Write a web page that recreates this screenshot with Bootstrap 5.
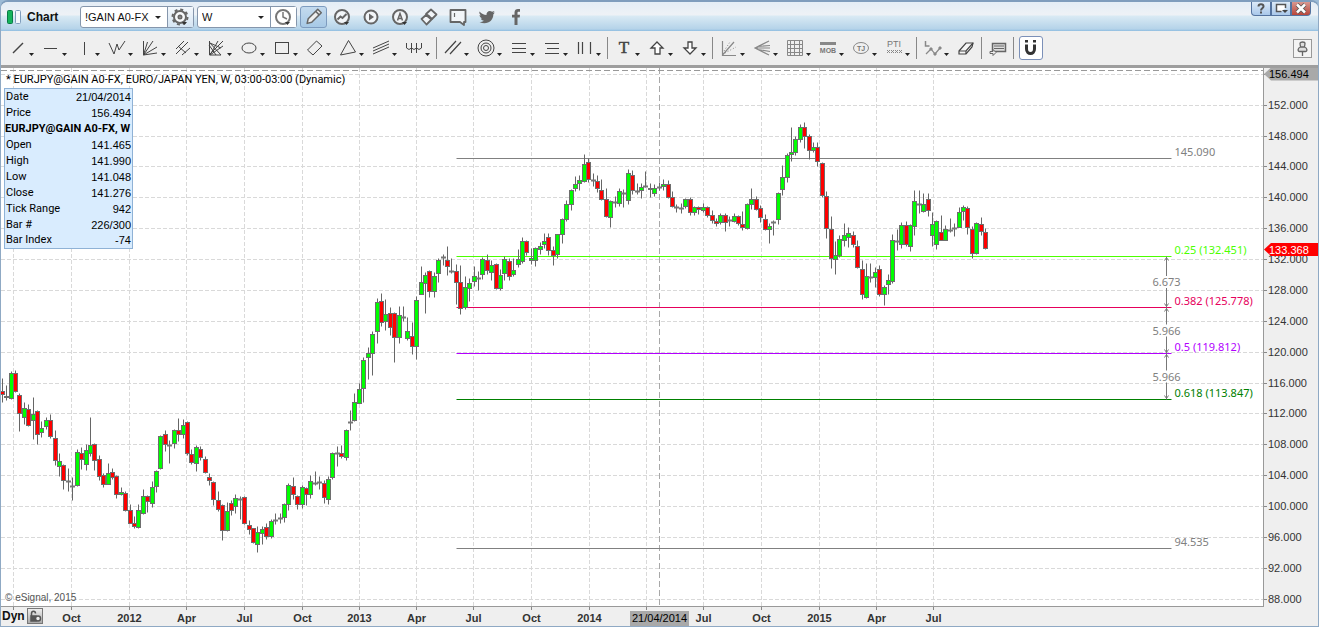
<!DOCTYPE html>
<html lang="en">
<head>
<meta charset="utf-8">
<meta name="viewport" content="width=device-width, initial-scale=1">
<title>Chart - EURJPY</title>
<link href="https://cdn.jsdelivr.net/npm/bootstrap@5.3.0/dist/css/bootstrap.min.css" rel="stylesheet">
<style>
  :root { --ui: "Liberation Sans", Arial, sans-serif; --edge: #8fa9c4; --panel: #efefef; }
  body { font: 11px/16px var(--ui); color: #111; background: #9dbbd6; }
  .window { border: 1px solid var(--edge); border-top: 2px solid #7f9dbd; border-radius: 8px 8px 0 0; background: var(--panel); }
  .titlebar { height: 29px; padding-left: 6px; background: linear-gradient(#e4edf6, #eef2f6 13px, #d9eaf4 14px, #b5d3e9 27px, #8fbde0); }
  .app-name { font-size: 12px; font-weight: 700; width: 58px; padding-left: 5px; }
  .combo { height: 22px; background: #fff; border: 1px solid #8596ac; border-radius: 3px; margin-right: 3px; }
  .combo select { appearance: none; border: 0; background: transparent; padding: 0 0 0 4px; font: 11px/20px var(--ui); color: #111; height: 20px; outline-offset: -1px; }
  .pick::after { content: ""; position: absolute; right: 6px; top: 9px; border: 3px solid transparent; border-top-color: #222; border-bottom: 0; pointer-events: none; }
  .symbol-pick { width: 86px; }
  .interval-pick { width: 72px; }
  .plain { border: 0; background: none; padding: 0; display: block; color: #666; }
  .plain svg, .tool svg { display: block; }
  .combo .plain { border-left: 1px solid #8596ac; height: 20px; width: 26px; background: linear-gradient(#f4f8fc, #d5e5f3); }
  .combo .plain.white { background: #fff; }
  .pencil { height: 22px; width: 27px; border: 1px solid #7d9bbf; border-radius: 3px; background: linear-gradient(#c4daee, #a7c9e6); }
  .top-tool { width: 29px; }
  .win-btns { height: 14px; margin-right: 7px; }
  .win-btns button { width: 20px; height: 14px; border: 1px solid #54739f; border-top: 0; background: linear-gradient(#dceaf8, #a9c8ea); }
  .win-btns button.closer { background: linear-gradient(#d99890, #b8453a); }
  .win-btns button:first-child { border-radius: 0 0 0 4px; }
  .win-btns button:last-child { border-radius: 0 0 4px 0; }
  .toolbar { height: 34px; padding: 0 6px 0 4px; }
  .tool { border: 0; background: none; padding: 0; width: 33px; height: 24px; color: #444; }
  .tool.narrow { width: 26px; }
  .tool.faded { color: #888; }
  .rule { width: 1px; height: 22px; background: #888; margin: 0 3px 0 2px; }
  .magnet { width: 24px; height: 24px; border: 1px solid #7b90b8; border-radius: 3px; background: #fff; margin-left: 2px; }
  .pin { width: 19px; height: 19px; border: 1px solid #999; background: #f4f4f4; color: #666; }
  .workspace { border-top: 3px solid #9e9e9e; display: grid; grid-template-columns: minmax(0, 1fr) 54px; grid-template-rows: minmax(0, 1fr) 19px; }
  .plot { background: #fff; border-right: 1px solid #999; border-bottom: 1px solid #999; overflow: hidden; }
  .workspace svg.scale { display: block; width: 100%; height: 100%; }
  .workspace svg text { font-family: var(--ui); font-size: 11px; fill: #333; }
  .workspace svg text.fib { font-family: "Noto Sans", sans-serif; }
  .readout { left: 3px; top: 4px; font-family: Roboto, var(--ui); color: #000; }
  .readout h1 { font-size: 11px; line-height: 16px; margin: 0 0 0 2px; font-weight: 400; }
  .bar-info { width: 129px; border: 1px solid #8fb2d6; background: #d9ecfe; }
  .bar-info th, .bar-info td { padding: 0 1px; height: 16px; line-height: 14px; font-weight: 400; white-space: nowrap; }
  .bar-info td { font-family: var(--ui); }
  .bar-info th[colspan] { font-weight: 700; padding: 0; }
  .credit { left: 4px; bottom: 0; font-size: 10px; color: #555; }
  .dyn { font-size: 12px; font-weight: 700; left: 1px; top: 0; line-height: 18px; gap: 2px; }
  .lock { width: 16px; height: 16px; border: 1px solid #777; background: linear-gradient(#eee, #aaa); padding: 0; color: #555; }
</style>
</head>
<body>
<svg width="0" height="0" class="position-absolute" aria-hidden="true">
  <defs><path id="caret" d="M24 17h5l-2.500 3z" fill="#222"/></defs>
</svg>
<div class="window vh-100 d-flex flex-column overflow-hidden">

  <header class="titlebar d-flex align-items-center flex-shrink-0">
    <svg width="15" height="16" aria-hidden="true"><rect x=".5" y="1.500" width="5" height="13" rx="1" fill="#16b45c" stroke="#0a7a46"/><rect x="8.500" y="1.500" width="5" height="13" rx="1" fill="#f4f8fc" stroke="#7f9dbd"/></svg>
    <span class="app-name">Chart</span>
    <div class="combo d-flex">
      <div class="pick position-relative"><select class="symbol-pick" aria-label="Symbol"><option>!GAIN A0-FX</option></select></div>
      <button class="plain" type="button" aria-label="Symbol settings"><svg width="25" height="20" fill="none" stroke="currentColor"><circle cx="12" cy="10" r="6" fill="#f6f8fa" stroke-width="2"/><circle cx="12" cy="10" r="7.500" stroke-width="2" stroke-dasharray="3 2.890"/><circle cx="12" cy="10" r="1.500" stroke-width="2"/><path d="M14 15h5l-2.500 3z" fill="#333" stroke="none"/></svg></button>
    </div>
    <div class="combo d-flex">
      <div class="pick position-relative"><select class="interval-pick" aria-label="Interval"><option>W</option></select></div>
      <button class="plain white" type="button" aria-label="Time template"><svg width="25" height="20" fill="none" stroke="#777"><circle cx="12" cy="10" r="7" stroke-width="2"/><path d="M12 5v5l4 2" stroke-width="1.500"/><path d="M14 15h5l-2.500 3z" fill="#333" stroke="none"/></svg></button>
    </div>
    <button class="plain pencil" type="button" aria-label="Drawing tools"><svg width="25" height="20"><g transform="translate(12.500 10) rotate(45)" fill="#eee" stroke="#666" stroke-width="1.500" stroke-linejoin="round"><path d="M-2.500-8.500h5V5L0 9-2.500 5z"/><path d="M-2.500-5.500h5"/></g></svg></button>
    <button class="plain top-tool" type="button" aria-label="Studies"><svg width="29" height="20" fill="none" stroke="currentColor"><circle cx="15" cy="10" r="7" fill="#f2f5f8" stroke-width="2"/><path d="M10.500 12.500l3-3 2 1.500 4-4" stroke-width="2"/><path d="M17 15h5l-2.500 3z" fill="#333" stroke="none"/></svg></button>
    <button class="plain top-tool" type="button" aria-label="Playback"><svg width="29" height="20"><circle cx="15" cy="10" r="6.500" fill="#f2f5f8" stroke="currentColor" stroke-width="2"/><path d="M13 6.500l5 3.500-5 3.500z" fill="currentColor"/></svg></button>
    <button class="plain top-tool" type="button" aria-label="Alerts"><svg width="29" height="20"><circle cx="15" cy="10" r="7" fill="#f2f5f8" stroke="currentColor" stroke-width="2"/><path d="M12.500 13.500l2.500-7 2.500 7M13.500 11.500h3" fill="none" stroke="currentColor" stroke-width="1.500"/><path d="M17 15h5l-2.500 3z" fill="#333"/></svg></button>
    <button class="plain top-tool" type="button" aria-label="Link"><svg width="29" height="20" fill="#f2f5f8" stroke="currentColor" stroke-width="1.800" stroke-linejoin="round"><path d="M12 7l5-4.500 5.500 5L18 12z"/><path d="M7.500 12l4.500-4 5.500 4.500-5 5z"/><path d="M14 8l3 4" stroke-width="2"/></svg></button>
    <button class="plain top-tool" type="button" aria-label="Comment"><svg width="29" height="20"><path d="M7.500 3h15v12H21v3l-4-3H7.500z" fill="#f2f5f8" stroke="currentColor" stroke-width="1.800" stroke-linejoin="round"/><path d="M11.500 6v4" stroke="currentColor" stroke-width="1.200"/></svg></button>
    <button class="plain top-tool" type="button" aria-label="Twitter"><svg width="29" height="20" fill="currentColor"><path d="M7.500 4.500c2 2.300 4.300 3.300 7 3.500-.5-3 3-5.500 5.600-3.200l2.400-.8-1.300 2 1.600-.4-1.500 1.800c.2 6-6.300 11.200-13.800 7.600 2 0 3.300-.4 4.500-1.300-1.700-.2-2.600-1-3.200-2.300h1.400c-1.700-.6-2.700-1.800-2.600-3.400l1.400.4C7.500 7.200 7 6 7.500 4.500z"/></svg></button>
    <button class="plain top-tool" type="button" aria-label="Facebook"><svg width="29" height="20" fill="currentColor"><path d="M13.500 18v-7.500H11V7.700h2.500V5.500C13.500 3 15 2 17 2h2v2.700h-1.500c-.8 0-1 .4-1 1.200v1.800H19l-.3 2.800h-2.200V18z"/></svg></button>
    <div class="win-btns d-flex ms-auto align-self-start">
      <button class="plain" type="button" aria-label="Help"><svg width="18" height="13"><path d="M6.500 4.500c0-3 5-3 5 0 0 1.700-2.500 2-2.500 4M9 9.500v2" fill="none" stroke="#555" stroke-width="2"/></svg></button>
      <button class="plain" type="button" aria-label="Window options"><svg width="18" height="13"><path d="M13.500 6V2.500h-9v7h5" fill="#fff" stroke="#555" stroke-width="1.500"/><path d="M10 8h6l-3 3z" fill="#444"/></svg></button>
      <button class="plain closer" type="button" aria-label="Close"><svg width="18" height="13"><path d="M5 2.500l8 8M13 2.500l-8 8" stroke="#555" stroke-width="4"/><path d="M5 2.500l8 8M13 2.500l-8 8" stroke="#fff" stroke-width="2.500"/></svg></button>
    </div>
  </header>

  <nav class="toolbar d-flex align-items-center flex-shrink-0" aria-label="Line tools">
    <button class="tool" type="button" aria-label="Trend line"><svg width="33" height="24" fill="none" stroke="currentColor"><path d="M8 17L18 7" stroke-width="1.500"/><use href="#caret" stroke="none"/></svg></button>
    <button class="tool" type="button" aria-label="Horizontal line"><svg width="33" height="24" fill="none" stroke="currentColor"><path d="M6 12.500h13"/><use href="#caret" stroke="none"/></svg></button>
    <button class="tool" type="button" aria-label="Vertical line"><svg width="33" height="24" fill="none" stroke="currentColor"><path d="M13.500 6v13"/><use href="#caret" stroke="none"/></svg></button>
    <button class="tool" type="button" aria-label="Zigzag"><svg width="33" height="24" fill="none" stroke="currentColor"><path d="M5 7l5 11 3-10 2 6 6-9"/><use href="#caret" stroke="none"/></svg></button>
    <button class="tool" type="button" aria-label="Fan"><svg width="33" height="24" fill="none" stroke="currentColor"><path d="M6.500 5v14L20 17M6.500 19L20 11M6.500 19L16 5M6.500 19l4-13"/><use href="#caret" stroke="none"/></svg></button>
    <button class="tool" type="button" aria-label="Pitchfork"><svg width="33" height="24" fill="none" stroke="currentColor"><path d="M6 13l8-8M6 18L18 6M12 19l8-7M8 10l8 7"/><use href="#caret" stroke="none"/></svg></button>
    <button class="tool" type="button" aria-label="Gann fan"><svg width="33" height="24" fill="none" stroke="currentColor"><path d="M6.500 5v14H18M6 19L20 5M6 6l12 13M7 19L15 5M7 19l13-9M6 9l7 10M7 7l11 5"/><use href="#caret" stroke="none"/></svg></button>
    <button class="tool" type="button" aria-label="Ellipse"><svg width="33" height="24" fill="none" stroke="currentColor"><ellipse cx="13" cy="12" rx="7" ry="5"/><use href="#caret" stroke="none"/></svg></button>
    <button class="tool" type="button" aria-label="Rectangle"><svg width="33" height="24" fill="none" stroke="currentColor"><rect x="6.500" y="6.500" width="13" height="11"/><use href="#caret" stroke="none"/></svg></button>
    <button class="tool" type="button" aria-label="Parallelogram"><svg width="33" height="24" fill="none" stroke="currentColor"><path d="M5.500 14l9-9 5.500 5-9 9z"/><use href="#caret" stroke="none"/></svg></button>
    <button class="tool" type="button" aria-label="Triangle"><svg width="33" height="24" fill="none" stroke="currentColor"><path d="M13.500 4.500L20.500 16l-15 3z"/><use href="#caret" stroke="none"/></svg></button>
    <button class="tool" type="button" aria-label="Regression channel"><svg width="33" height="24" fill="none" stroke="currentColor"><path d="M5 12l16-7M5 15l16-7M5 18l16-7"/><use href="#caret" stroke="none"/></svg></button>
    <button class="tool" type="button" aria-label="Cycle lines"><svg width="33" height="24" fill="none" stroke="currentColor"><path d="M5.500 7v5q2.500 3 5 0 2.500 3 5 0 2.500 3 5 0V7M10.500 7v10M15.500 7v10"/><use href="#caret" stroke="none"/></svg></button>
    <span class="rule"></span>
    <button class="tool" type="button" aria-label="Parallel lines"><svg width="33" height="24" fill="none" stroke="currentColor" stroke-width="1.200"><path d="M5 17L16 5M10 18L21 6"/><use href="#caret" stroke="none"/></svg></button>
    <button class="tool" type="button" aria-label="Fibonacci circles"><svg width="33" height="24" fill="none" stroke="currentColor"><circle cx="13" cy="12" r="8"/><circle cx="13" cy="12" r="5"/><circle cx="13" cy="12" r="2.500"/><use href="#caret" stroke="none"/></svg></button>
    <button class="tool" type="button" aria-label="Fibonacci retracement"><svg width="33" height="24" fill="none" stroke="currentColor"><path d="M6 7.500h14M6 12.500h14M6 16.500h14" stroke-width="1.200"/><use href="#caret" stroke="none"/></svg></button>
    <button class="tool" type="button" aria-label="Fibonacci extension"><svg width="33" height="24" fill="none" stroke="currentColor"><path d="M6 7.500h14M8 12.500h12M6 17.500h14" stroke-width="1.200"/><use href="#caret" stroke="none"/></svg></button>
    <button class="tool" type="button" aria-label="Fibonacci time"><svg width="33" height="24" fill="none" stroke="currentColor"><path d="M6.500 6v12M10.500 6v12M18.500 6v12" stroke-width="1.200"/><use href="#caret" stroke="none"/></svg></button>
    <span class="rule"></span>
    <button class="tool" type="button" aria-label="Text"><svg width="33" height="24"><text x="13" y="17" text-anchor="middle" font-family="Liberation Serif, serif" font-size="17" stroke="#444" stroke-width="0.500" fill="#444">T</text><use href="#caret"/></svg></button>
    <button class="tool" type="button" aria-label="Up arrow"><svg width="33" height="24" fill="#fff" stroke="currentColor" stroke-width="1.300"><path d="M13 6l6 6h-3v6h-5v-6H7z"/><use href="#caret" stroke="none"/></svg></button>
    <button class="tool" type="button" aria-label="Down arrow"><svg width="33" height="24" fill="#fff" stroke="currentColor" stroke-width="1.300"><path d="M13 18l6-6h-4V6h-4v6H7z"/><use href="#caret" stroke="none"/></svg></button>
    <span class="rule"></span>
    <button class="tool faded" type="button" aria-label="Speed lines"><svg width="33" height="24" fill="none" stroke="currentColor"><path d="M6.500 5v14.500H20M6.500 19L18 6" stroke-width="1.200"/><path d="M8 15l6-9M9 17l11-6" stroke-dasharray="1 2"/><use href="#caret" stroke="none"/></svg></button>
    <button class="tool faded" type="button" aria-label="Andrews fan"><svg width="33" height="24" fill="none" stroke="currentColor" stroke-width="1.200"><path d="M20 5L6 12l14 7M6 12h15M9 10.500l12-1M9 13.500l12 2"/><use href="#caret" stroke="none"/></svg></button>
    <button class="tool faded" type="button" aria-label="Gann box"><svg width="33" height="24" fill="none" stroke="currentColor"><path d="M5.500 4.500h15v15h-15zM8.500 4.500v15M12.500 4.500v15M17.500 4.500v15M5.500 8.500h15M5.500 12.500h15M5.500 16.500h15"/><use href="#caret" stroke="none"/></svg></button>
    <button class="tool faded" type="button" aria-label="Make or break"><svg width="33" height="24"><path d="M5 6h16v3H5z" fill="currentColor"/><text x="13" y="17" text-anchor="middle" font-family="Liberation Sans, sans-serif" font-size="7" font-weight="700" fill="#777">MOB</text><use href="#caret"/></svg></button>
    <button class="tool faded" type="button" aria-label="TJ ellipse"><svg width="33" height="24"><ellipse cx="13" cy="12" rx="7.500" ry="5.500" fill="none" stroke="currentColor"/><text x="13" y="15" text-anchor="middle" font-family="Liberation Sans, sans-serif" font-size="7" font-weight="700" fill="#777">TJ</text><use href="#caret"/></svg></button>
    <button class="tool faded" type="button" aria-label="Profit taking index"><svg width="33" height="24"><text x="13" y="11" text-anchor="middle" font-family="Liberation Sans, sans-serif" font-size="9" fill="#777">PTI</text><path d="M6 14l3 3M9 14l-3 3M10 14l3 3M13 14l-3 3M14 14l3 3M17 14l-3 3M18 14l3 3M21 14l-3 3" stroke="currentColor"/><use href="#caret"/></svg></button>
    <span class="rule"></span>
    <button class="tool faded" type="button" aria-label="Elliott labels"><svg width="33" height="24" fill="none" stroke="currentColor"><path d="M5.500 5v5h4" stroke-width="1.500"/><path d="M6 18l5-5 4 5 5-6" stroke-width="1.200"/><path d="M10 12h2v2h-2zM14 17h2v2h-2zM19 11h2v2h-2z" fill="currentColor"/><use href="#caret" stroke="none"/></svg></button>
    <button class="tool narrow" type="button" aria-label="Eraser"><svg width="26" height="24" fill="#f6f6f6" stroke="currentColor" stroke-width="1.200"><path d="M6 15l7-8h7l-1 4-6 7H6z"/><path d="M6 15h7l7-8M13 15v3" fill="none"/></svg></button>
    <span class="rule"></span>
    <button class="tool narrow" type="button" aria-label="Notes"><svg width="26" height="24" fill="none" stroke="#666"><path d="M7.500 7.500h13v8h-13z" fill="#ddd" stroke-width="1.500"/><path d="M9 10h10M9 12.500h10"/><path d="M5 15.500h3v-2l3 3-3 3v-2H5z" fill="#efefef"/></svg></button>
    <span class="rule"></span>
    <button class="tool magnet" type="button" aria-label="Snap"><svg width="22" height="22" fill="none" stroke="#333" stroke-width="3"><path d="M6.500 7.500V12c0 6 8 6 8 0V7.500M6.500 3v2.500M14.500 3v2.500"/></svg></button>
    <button class="tool pin ms-auto" type="button" aria-label="Pin toolbar"><svg width="17" height="17" fill="#ddd" stroke="currentColor" stroke-width="1.300"><path d="M8.500 12v4" /><path d="M6 3.500c0-2 5-2 5 0L10.500 7c3 1 3 4.500 1 4.500h-6c-2 0-2-3.500 1-4.500zM6.500 7h4"/></svg></button>
  </nav>

  <main class="workspace flex-grow-1">
    <section class="plot position-relative">
      <svg id="plot" class="scale" role="img" aria-label="Weekly candlestick chart of EURJPY"></svg>
      <div class="readout position-absolute">
        <h1>* EURJPY@GAIN A0-FX, EURO/JAPAN YEN, W, 03:00-03:00 (Dynamic)</h1>
        <table class="bar-info">
          <tbody>
            <tr><th scope="row">Date</th><td class="text-end">21/04/2014</td></tr>
            <tr><th scope="row">Price</th><td class="text-end">156.494</td></tr>
            <tr><th colspan="2">EURJPY@GAIN A0-FX, W</th></tr>
            <tr><th scope="row">Open</th><td class="text-end">141.465</td></tr>
            <tr><th scope="row">High</th><td class="text-end">141.990</td></tr>
            <tr><th scope="row">Low</th><td class="text-end">141.048</td></tr>
            <tr><th scope="row">Close</th><td class="text-end">141.276</td></tr>
            <tr><th scope="row">Tick Range</th><td class="text-end">942</td></tr>
            <tr><th scope="row">Bar #</th><td class="text-end">226/300</td></tr>
            <tr><th scope="row">Bar Index</th><td class="text-end">-74</td></tr>
          </tbody>
        </table>
      </div>
      <div class="credit position-absolute">© eSignal, 2015</div>
    </section>
    <svg id="prices" class="scale" role="img" aria-label="Price scale"></svg>
    <div class="position-relative">
      <svg id="dates" class="scale" role="img" aria-label="Date scale"></svg>
      <div class="dyn position-absolute d-flex align-items-center">Dyn
        <button class="lock" type="button" aria-label="Lock scale"><svg class="d-block" width="14" height="14" fill="none" stroke="currentColor" stroke-width="1.500"><path d="M3.500 7V4.500c0-3 4-3 4 0"/><path d="M3 7h5v5H3z" fill="currentColor"/><circle cx="10" cy="9.500" r="2.500" fill="#eee"/></svg></button>
      </div>
    </div>
    <div></div>
  </main>
</div>

<script src="https://cdn.jsdelivr.net/npm/bootstrap@5.3.0/dist/js/bootstrap.bundle.min.js"></script>
<script>
// Weekly bars: high, body top, body bottom, low in scale steps, then g (up), r (down) or d (flat).
const BARS = `378 391 394 402 r|385 396 397 400 r|371 373 398 399 g|370 373 391 392 r|393 395 413 431 r|402 408 417 424 g|404 409 425 426 r|397 414 420 439 g
410 411 434 444 r|421 428 432 437 g|417 420 426 429 g|414 420 436 438 r|430 438 460 465 r|453 461 466 476 g|464 465 480 489 r|468 481 481 491 d
477 486 486 500 d|449 452 485 486 g|447 453 459 469 r|444 450 464 470 g|417 445 453 456 g|443 444 460 470 r|455 459 476 480 r|473 475 484 487 r
463 473 484 484 g|468 472 477 479 r|475 476 494 498 r|487 492 494 495 g|491 493 510 511 r|504 510 523 523 r|516 523 526 528 r|504 510 527 528 g
489 496 513 514 g|495 496 501 512 r|481 487 503 507 g|470 471 486 492 g|435 436 468 469 g|430 434 444 451 r|440 445 445 463 d|429 430 443 448 g
418 430 434 441 r|419 425 434 438 g|421 422 453 455 r|449 454 462 464 r|445 447 463 471 g|446 449 457 460 r|456 459 472 473 r|473 477 480 485 r
481 482 499 505 r|491 500 509 511 r|504 505 530 540 r|502 511 530 531 g|500 503 510 515 r|494 498 506 513 g|496 499 499 519 d|496 497 523 524 r
520 525 529 534 r|528 528 542 543 r|526 532 544 552 g|526 529 533 544 g|523 527 536 539 r|519 521 536 538 g|513 520 520 524 d|513 518 518 523 d
503 504 517 522 g|483 485 504 510 g|477 486 494 499 r|495 496 504 509 r|485 487 504 508 g|487 488 494 505 r|475 481 494 498 g|471 483 483 485 d
476 482 482 489 d|480 483 497 503 r|476 479 499 504 g|452 453 477 479 g|446 453 453 466 d|445 453 456 458 r|429 430 457 460 g|410 422 422 430 d
393 402 420 421 g|383 389 403 403 g|357 360 388 402 g|347 353 357 379 g|331 334 353 375 g|298 302 331 343 g|293 301 322 326 r|299 314 321 330 g
307 313 327 335 r|312 313 337 362 r|306 315 337 343 g|306 317 317 321 d|317 331 338 340 g|322 336 346 354 r|296 300 346 359 g|266 282 294 294 g
272 275 283 313 g|270 271 291 297 r|272 276 291 297 g|258 260 273 282 g|254 257 257 265 d|246 260 266 275 r|258 271 271 273 d|264 271 282 304 r
265 282 308 314 r|276 287 307 309 g|278 283 288 301 g|266 276 281 286 g|271 278 278 290 d|257 259 274 279 g|254 260 270 274 r|260 265 272 280 g
263 264 288 289 r|269 275 288 290 g|256 259 273 280 g|258 261 276 280 r|258 270 274 276 g|249 259 264 267 g|237 241 261 263 g|240 241 252 255 r
248 258 260 264 g|247 248 260 266 g|242 246 249 254 g|233 241 244 248 g|233 237 250 255 r|246 250 255 265 r|234 234 254 258 g|218 219 234 243 g
200 204 219 221 g|189 190 204 210 g|176 184 188 191 g|175 180 183 190 g|154 164 181 182 g|158 162 179 182 r|173 180 180 186 d|175 181 188 192 r
179 190 199 200 r|188 199 216 217 r|200 201 217 227 g|196 202 202 207 d|188 191 203 206 g|189 193 193 207 d|169 173 200 204 g|170 175 190 194 r
183 191 191 194 d|183 187 190 198 g|171 186 186 187 d|183 188 189 197 r|184 188 193 196 g|182 187 187 190 d|179 184 186 190 g|180 184 197 198 r
191 197 206 207 r|204 207 207 212 d|203 208 208 213 d|198 199 206 208 g|197 199 212 215 r|206 207 212 215 g|206 207 209 214 r|203 207 210 212 g
206 207 215 217 r|210 215 220 223 r|218 221 223 226 r|213 215 222 224 g|213 215 222 231 r|216 220 220 226 d|213 216 221 222 g|215 216 223 225 r
211 224 227 230 r|203 204 228 229 g|188 199 204 209 g|196 199 209 210 r|205 208 217 222 r|214 219 229 230 r|223 226 229 243 g|220 222 222 235 d
192 193 219 224 g|165 177 189 195 g|153 155 177 182 g|127 152 154 161 g|136 139 152 155 g|124 127 139 142 g|122 127 136 148 r|134 136 150 159 r
142 147 150 152 g|142 147 161 166 r|162 163 195 197 r|191 196 228 238 r|216 229 258 268 r|241 255 259 274 g|235 239 255 257 g|223 235 240 246 g
227 233 237 247 g|231 235 244 247 r|240 246 267 268 r|260 269 294 299 r|263 276 297 298 g|263 277 277 282 d|267 272 277 287 g|265 269 294 296 r
285 287 294 305 g|274 280 284 294 g|234 240 281 283 g|229 241 241 250 d|222 225 244 248 g|221 225 244 246 r|224 225 246 251 g|190 201 226 235 g
190 204 204 213 d|193 204 211 212 g|193 199 210 216 r|212 224 235 246 g|220 221 244 249 g|215 232 240 240 r|225 229 240 240 g|218 230 230 232 d
223 228 228 236 d|207 212 227 227 g|205 207 211 220 g|206 208 227 234 r|226 229 253 258 r|222 223 253 254 g|217 224 231 235 r|228 232 248 249 r`
  .split(/[|\n]/).map(s => s.trim().split(' '));

const STEP_TOP = 68, STEPS = 539, SPAN = 1263;            // extent of the step scale and of the time scale
const toStep = price => 104.7 + (152 - price) * 7.719;    // price to scale step
const FIBS = [
  [145.090, '145.090', '#808080'], [132.451, '0.25 (132.451)', '#4cff00'], [125.778, '0.382 (125.778)', '#e6005c'],
  [119.812, '0.5 (119.812)', '#b200ff'], [113.847, '0.618 (113.847)', '#008000'], [94.535, '94.535', '#808080']
];
const GAPS = [[132.451, 125.778, '6.673'], [125.778, 119.812, '5.966'], [119.812, 113.847, '5.966']];
const MONTHS = [[13, ''], [71, 'Oct'], [129, '2012'], [186, 'Apr'], [244, 'Jul'], [302, 'Oct'], [359, '2013'], [416, 'Apr'], [473, 'Jul'],
  [531, 'Oct'], [589, '2014'], [646, ''], [703, 'Jul'], [761, 'Oct'], [819, '2015'], [876, 'Apr'], [933, 'Jul']];

function draw() {
  const plot = document.getElementById('plot'), W = plot.clientWidth, H = plot.clientHeight;
  const X = u => Math.floor((u - 1) / SPAN * (W + 1) + .01) + .5;
  const Y = s => Math.round((s - STEP_TOP) / STEPS * (H + 1)) + .5;
  const line = (x1, y1, x2, y2, c, extra = '') => `<path d="M${x1} ${y1}L${x2} ${y2}" stroke="${c}" ${extra}/>`;
  const dash = 'stroke-dasharray="4 2"';
  let o = '', p = '', d = '';

  for (let v = 156; v >= 88; v -= 4) {
    const y = Y(toStep(v));
    o += line(0, y, W, y, '#d9d9d9', dash);
    p += line(0, y, 3, y, '#888');
    if (v < 156) p += `<text x="4" y="${y + 3.5}">${v}.000</text>`;
  }
  for (const [u, name] of MONTHS) {
    o += line(X(u), 0, X(u), H, '#d9d9d9', dash);
    d += line(X(u), 0, X(u), 3, '#888');
    d += `<text x="${X(u)}" y="15" text-anchor="middle" font-weight="700">${name}</text>`;
  }
  const cx = X(659);
  o += line(cx, 0, cx, H, '#a8a8a8', 'stroke-dasharray="6 3"') + line(0, Y(70), W, Y(70), '#999', 'stroke-dasharray="6 3"');
  d += `<rect x="${cx - 29.5}" y="4" width="59" height="15" fill="#a9a9a9"/><text x="${cx}" y="15" text-anchor="middle" style="fill:#000">21/04/2014</text>`;

  for (const [v, label, c] of FIBS) {
    const y = Y(toStep(v));
    o += line(X(456), y, X(1171), y, c);
    o += `<text class="fib" x="${X(1174)}" y="${y - 2.5}" style="fill:${c}">${label}</text>`;
  }
  const ax = X(1166);
  for (const [a, b, label] of GAPS) {
    const y1 = Y(toStep(a)), y2 = Y(toStep(b)), m = (y1 + y2) / 2;
    o += line(ax, y1, ax, m - 6, '#777') + line(ax, m + 6, ax, y2, '#777');
    o += `<path d="M${ax - 2} ${y1 + 4}l2-3 2 3M${ax - 2} ${y2 - 4}l2 3 2-3" fill="none" stroke="#777"/>`;
    o += `<text class="fib" x="${ax}" y="${m + 4}" text-anchor="middle" style="fill:#808080">${label}</text>`;
  }
  BARS.forEach(([h, t, b, l, k], i) => {
    const x = X(2.25 + 4.409 * i);
    o += line(x, Y(+h), x, Y(+l), '#666');
    o += k === 'd' ? line(x - 2.5, Y(+t), x + 2.5, Y(+t), '#777', 'stroke-width="2"')
      : `<rect x="${x - 2}" y="${Y(+t)}" width="4" height="${Math.max(1, Y(+b) - Y(+t))}" fill="${k === 'g' ? '#0f0' : '#f00'}" stroke="#6e6e6e"/>`;
  });

  const tag = (y, fill, color, label) => `<path d="M0 ${y}l7-6.500h47v13h-47z" fill="${fill}"/><text x="5" y="${y + 4}" style="fill:${color}">${label}</text>`;
  p += tag(6, '#a9a9a9', '#000', '156.494') + tag(Y(toStep(133.368)), '#f00', '#fff', '133.368');

  plot.innerHTML = o;
  document.getElementById('prices').innerHTML = p;
  document.getElementById('dates').innerHTML = d;
}
draw();
addEventListener('resize', draw);
</script>
</body>
</html>
